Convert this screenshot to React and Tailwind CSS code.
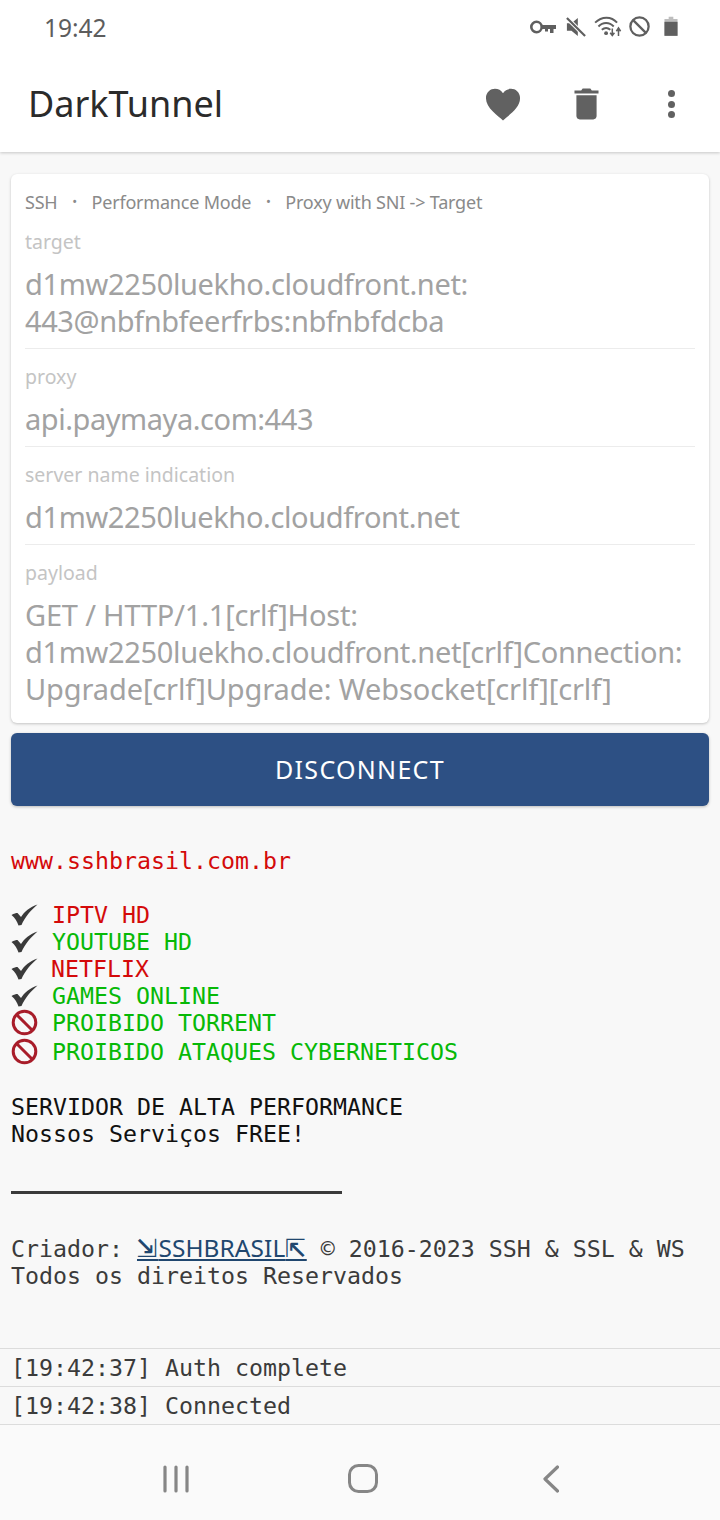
const sans = "font-['Noto_Sans','Open_Sans',sans-serif]";
const mono = "font-['DejaVu_Sans_Mono','Liberation_Mono',monospace]";

function Check() {
  return (
    <svg width="27" height="22" viewBox="0 0 27 22" className="shrink-0">
      <path d="M0.500 11 C3 9.500 5 9 6.500 9 L10 13 C13 8 19 3 26.500 0.500 C20 6 14 13 10.500 21 L7.500 21.500 C6 17 4 14 0.500 11 Z" fill="#3a3a3a" />
    </svg>
  );
}

function Ban() {
  return (
    <svg width="27" height="27" viewBox="0 0 27 27" className="shrink-0">
      <circle cx="13.500" cy="13.500" r="11.300" fill="none" stroke="#a81d2a" strokeWidth="3" />
      <path d="M5.500 5.500 L21.500 21.500" stroke="#a81d2a" strokeWidth="3" />
    </svg>
  );
}

function Row({ icon, color, gap, h = "h-[27px]", children }) {
  return (
    <div className={`flex items-center ${h} ${color}`}>
      <span className="w-[27px] flex items-center justify-center">{icon}</span>
      <span style={{ marginLeft: gap }}>{children}</span>
    </div>
  );
}

function Field({ label, lines, border = true }) {
  return (
    <div className={border ? "border-b border-[#ececec]" : ""}>
      <div className="mt-[13px] h-[30px] flex items-center text-[19.500px] text-[#c4c4c4]">{label}</div>
      <div className="pt-[8px] pb-[9px] text-[29px] leading-[37px] text-[#a2a2a2]">
        {lines.map(([l, track]) => (
          <div key={l} className={`whitespace-nowrap ${track}`}>{l}</div>
        ))}
      </div>
    </div>
  );
}

const Dot = () => <span className="w-[34px] text-center text-[13px]">•</span>;

export default function App() {
  return (
    <div className={`w-[720px] h-[1520px] bg-[#f8f8f8] flex flex-col overflow-hidden ${sans}`}>
      <header className="bg-white h-[152px] shadow-[0_1px_3px_rgba(0,0,0,0.2)] shrink-0">
        <div className="h-[56px] flex items-center justify-between pb-[3px] pl-[44px] pr-[42px]">
          <span className="text-[24.500px] text-[#5d5d5d] mt-[3px]">19:42</span>
          <div className="flex items-center text-[#5f5f5f]">
            <svg width="26" height="14" viewBox="0 0 26 14" className="mr-[10px]">
              <circle cx="6.500" cy="7" r="5.200" fill="none" stroke="#5f5f5f" strokeWidth="2.600" />
              <path d="M11.500 5 H26 V9 H23.500 V13 H20 V9 H18 V11.500 H15 V9 H11.500 Z" fill="#5f5f5f" />
            </svg>
            <svg width="20" height="20" viewBox="0 0 22 22" className="mr-[8px]">
              <path d="M1 7 H6 L13 1 V21 L6 15 H1 Z" fill="#5f5f5f" />
              <path d="M1 1 L21 21" stroke="#fff" strokeWidth="4.500" />
              <path d="M1 1 L21 21" stroke="#5f5f5f" strokeWidth="2.400" />
            </svg>
            <svg width="28" height="21" viewBox="0 0 29 22" className="mr-[7px]">
              <path d="M1 7 C8 0 18 0 24 7 M4.500 11 C9 6 16 6 20.500 11 M8 14.500 C11 12 14 12 17 14.500" fill="none" stroke="#5f5f5f" strokeWidth="2" />
              <circle cx="12.500" cy="18" r="2" fill="#5f5f5f" />
              <path d="M19 13 V20 M16.800 17.500 L19 20.500 L21.200 17.500 M25.500 21 V13 M23.300 16 L25.500 12.500 L27.700 16" fill="none" stroke="#5f5f5f" strokeWidth="1.600" />
            </svg>
            <svg width="21" height="21" viewBox="0 0 23 23" className="mr-[14px]">
              <circle cx="11.500" cy="11.500" r="10" fill="none" stroke="#5f5f5f" strokeWidth="2.500" />
              <path d="M4.500 4.500 L18.500 18.500" stroke="#5f5f5f" strokeWidth="2.500" />
            </svg>
            <svg width="14" height="21" viewBox="0 0 15 22">
              <path d="M5 0.500 H10 V3 H14.500 V21 H0.500 V3 H5 Z" fill="#bdbdbd" />
              <path d="M0.500 6 H14.500 V21 H0.500 Z" fill="#5f5f5f" />
            </svg>
          </div>
        </div>
        <div className="h-[96px] flex items-center pl-[28px]">
          <span className="text-[36px] text-[#2b2b2b] flex-1">DarkTunnel</span>
          <svg width="36" height="33" viewBox="0 0 38 34" className="mr-[53px]">
            <path d="M19 34 C14 29 1 21 1 10.500 C1 4 6 0.500 10.500 0.500 C14 0.500 17 2 19 5 C21 2 24 0.500 27.500 0.500 C32 0.500 37 4 37 10.500 C37 21 24 29 19 34 Z" fill="#616161" />
          </svg>
          <svg width="25" height="32" viewBox="0 0 26 33" className="mr-[69px]">
            <path d="M9 0.500 H17 L18.500 2.500 H25.500 V5.500 H0.500 V2.500 H7.500 Z" fill="#616161" />
            <path d="M2.500 7.500 H23.500 V29 C23.500 31 22 32.500 20 32.500 H6 C4 32.500 2.500 31 2.500 29 Z" fill="#616161" />
          </svg>
          <div className="flex flex-col gap-[3.500px] mr-[45px]">
            <span className="w-[7px] h-[7px] rounded-full bg-[#616161]" />
            <span className="w-[7px] h-[7px] rounded-full bg-[#616161]" />
            <span className="w-[7px] h-[7px] rounded-full bg-[#616161]" />
          </div>
        </div>
      </header>

      <section className="mx-[11px] mt-[22px] h-[549px] bg-white rounded-[6px] shadow-[0_1px_3px_rgba(0,0,0,0.22)] px-[14px] shrink-0">
        <div className="h-[40px] pt-[16px] flex items-center text-[18px] text-[#8a8a8a] tracking-[-0.2px] whitespace-nowrap">
          <span>SSH</span>
          <Dot />
          <span>Performance Mode</span>
          <Dot />
          <span>Proxy with SNI -&gt; Target</span>
        </div>
        <Field label="target" lines={[["d1mw2250luekho.cloudfront.net:", "tracking-[-0.35px]"], ["443@nbfnbfeerfrbs:nbfnbfdcba", "tracking-[-0.42px]"]]} />
        <Field label="proxy" lines={[["api.paymaya.com:443", "tracking-[-0.45px]"]]} />
        <Field label="server name indication" lines={[["d1mw2250luekho.cloudfront.net", "tracking-[-0.38px]"]]} />
        <Field border={false} label="payload" lines={[["GET / HTTP/1.1[crlf]Host:", "tracking-[-0.19px]"], ["d1mw2250luekho.cloudfront.net[crlf]Connection:", "tracking-[-0.33px]"], ["Upgrade[crlf]Upgrade: Websocket[crlf][crlf]", "tracking-[-0.12px]"]]} />
      </section>

      <button className="mx-[11px] mt-[10px] h-[73px] shrink-0 rounded-[6px] bg-[#2d5084] shadow-[0_1px_3px_rgba(0,0,0,0.25)] text-white text-[25px] tracking-[1.300px]">
        DISCONNECT
      </button>

      <main className={`pl-[11px] pt-[41px] text-[23.250px] leading-[27px] whitespace-pre text-[#111] flex-1 ${mono}`}>
        <div className="h-[27px] text-[#d40a0a]">www.sshbrasil.com.br</div>
        <div className="h-[27px]" />
        <Row icon={<Check />} color="text-[#d40a0a]" gap="14px">IPTV HD</Row>
        <Row icon={<Check />} color="text-[#07b907]" gap="14px">YOUTUBE HD</Row>
        <Row icon={<Check />} color="text-[#d40a0a]" gap="13px">NETFLIX</Row>
        <Row icon={<Check />} color="text-[#07b907]" gap="14px">GAMES ONLINE</Row>
        <Row icon={<Ban />} color="text-[#07b907]" gap="14px">PROIBIDO TORRENT</Row>
        <Row icon={<Ban />} color="text-[#07b907]" gap="14px" h="h-[30px]">PROIBIDO ATAQUES CYBERNETICOS</Row>
        <div className="h-[27px]" />
        <div className="h-[27px]">SERVIDOR DE ALTA PERFORMANCE</div>
        <div className="h-[27px]">Nossos Serviços FREE!</div>
        <div className="h-[44px]" />
        <div className="w-[331px] h-[3px] bg-[#3a3a3a]" />
        <div className="h-[40px]" />
        <div className="h-[28px] text-[#3b3b3b]">
          Criador: <a className="text-[#20476f] underline"><span className="text-[34px] leading-[0] tracking-[1px]">⇲</span><span className={`${sans} text-[24.400px] tracking-[0.1px]`}>SSHBRASIL</span><span className="text-[34px] leading-[0] tracking-[1px]">⇱</span></a> © 2016-2023 SSH &amp; SSL &amp; WS
        </div>
        <div className="h-[27px] text-[#3b3b3b]">Todos os direitos Reservados</div>
      </main>

      <div className={`shrink-0 text-[23.250px] text-[#3b3b3b] ${mono}`}>
        <div className="h-[38px] border-t border-[#dcdcdc] pl-[11px] pt-[1px] flex items-center">[19:42:37] Auth complete</div>
        <div className="h-[38px] border-t border-[#dcdcdc] pl-[11px] pt-[1px] flex items-center">[19:42:38] Connected</div>
      </div>
      <nav className="h-[96px] shrink-0 border-t border-[#dcdcdc] bg-[#fafafa] flex items-center pt-[12px] pl-[163px]">
        <svg width="26" height="28" viewBox="0 0 26 28" className="mr-[159px]">
          <path d="M2 2 V26 M13 2 V26 M24 2 V26" stroke="#868686" strokeWidth="3.200" strokeLinecap="round" />
        </svg>
        <svg width="30" height="29" viewBox="0 0 30 29" className="mr-[165px]">
          <rect x="1.500" y="1.500" width="27" height="26" rx="9" fill="none" stroke="#868686" strokeWidth="3" />
        </svg>
        <svg width="16" height="28" viewBox="0 0 16 28">
          <path d="M14.500 2 L2 14 L14.500 26" fill="none" stroke="#868686" strokeWidth="3.200" strokeLinecap="round" strokeLinejoin="round" />
        </svg>
      </nav>
    </div>
  );
}
